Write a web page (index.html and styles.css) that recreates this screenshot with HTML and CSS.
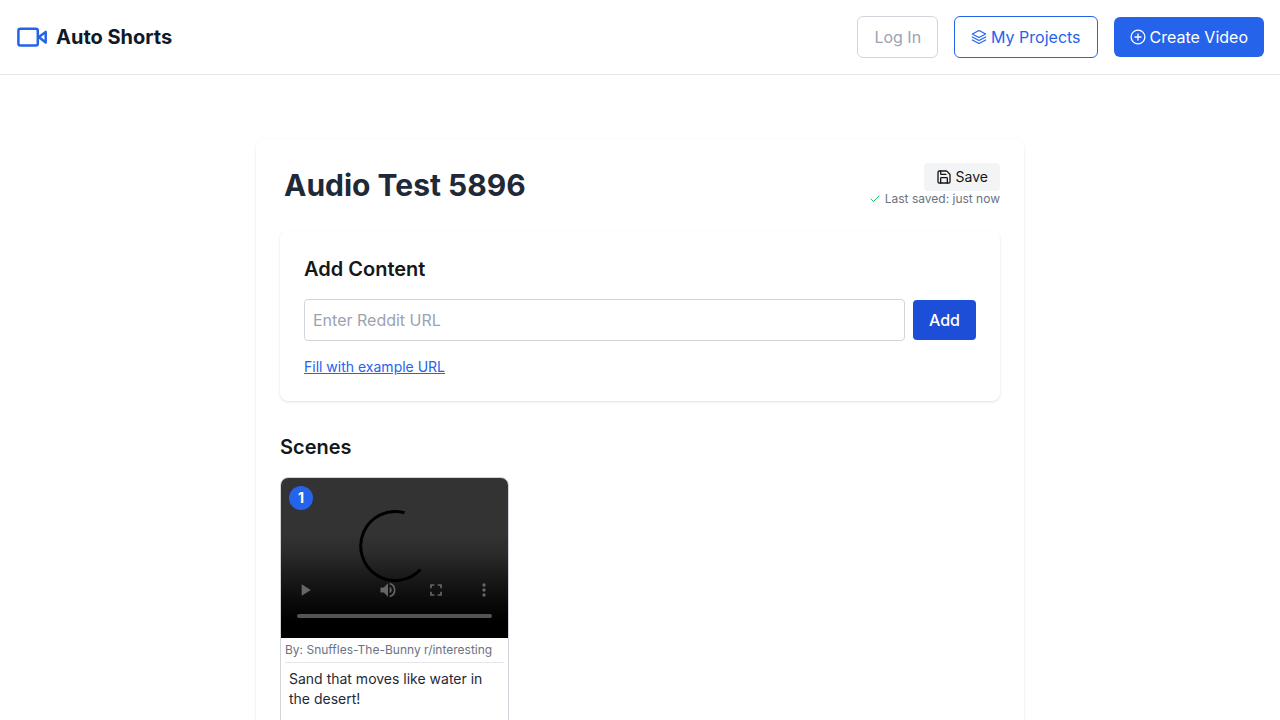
FILE: index.html
```html
<!DOCTYPE html>
<html lang="en">
<head>
<meta charset="utf-8">
<meta name="viewport" content="width=device-width, initial-scale=1">
<title>Auto Shorts</title>
<link rel="stylesheet" href="styles.css">
</head>
<body>
<header class="topbar">
  <a class="brand" href="#">
    <svg class="brand-icon" viewBox="0 0 32 32" fill="none" stroke="currentColor" stroke-width="2.500" stroke-linecap="round" stroke-linejoin="round"><rect x="2.400" y="7.800" width="19.400" height="16.600" rx="2"/><path d="M22.800 16 29.700 10.900v10.600z"/></svg>
    <span>Auto Shorts</span>
  </a>
  <nav class="actions">
    <button class="btn btn-muted" type="button">Log In</button>
    <a class="btn btn-outline" href="#">
      <svg class="icon" viewBox="0 0 16 16" fill="none" stroke="currentColor" stroke-width="1.2" stroke-linecap="round" stroke-linejoin="round"><path d="M8 1.500 14.700 5 8 8.500 1.300 5z"/><path d="M1.300 8 8 11.500 14.700 8"/><path d="M1.300 11 8 14.500 14.700 11"/></svg>
      <span>My Projects</span>
    </a>
    <a class="btn btn-primary" href="#">
      <svg class="icon" viewBox="0 0 16 16" fill="none" stroke="currentColor" stroke-width="1.300" stroke-linecap="round"><circle cx="8" cy="8" r="6.900"/><path d="M8 5v6M5 8h6"/></svg>
      <span>Create Video</span>
    </a>
  </nav>
</header>
<main class="project">
  <div class="project-head">
    <h1 class="project-title">Audio Test 5896</h1>
    <div class="save-area">
      <button class="btn-save" type="button">
        <svg class="icon" viewBox="0 0 24 24" fill="none" stroke="currentColor" stroke-width="2" stroke-linecap="round" stroke-linejoin="round"><path d="M15.200 3a2 2 0 0 1 1.400.600l3.800 3.800a2 2 0 0 1 .600 1.400V19a2 2 0 0 1-2 2H5a2 2 0 0 1-2-2V5a2 2 0 0 1 2-2z"/><path d="M17 21v-7a1 1 0 0 0-1-1H8a1 1 0 0 0-1 1v7M7 3v4a1 1 0 0 0 1 1h7"/></svg>
        <span>Save</span>
      </button>
      <p class="saved">
        <svg class="check" viewBox="0 0 24 24" fill="none" stroke="currentColor" stroke-width="2" stroke-linecap="round" stroke-linejoin="round"><path d="M20 6 9 17l-5-5"/></svg>
        <span>Last saved: just now</span>
      </p>
    </div>
  </div>
  <section class="add-card">
    <h2 class="heading">Add Content</h2>
    <form class="add-form">
      <input class="url-input" type="url" placeholder="Enter Reddit URL" aria-label="Reddit URL">
      <button class="btn-add" type="submit">Add</button>
    </form>
    <a class="example" href="#">Fill with example URL</a>
  </section>
  <section>
    <h2 class="heading">Scenes</h2>
    <div class="scenes">
      <article class="scene">
        <div class="player">
          <span class="badge">1</span>
          <svg class="spinner" viewBox="0 0 72 72" fill="none" stroke="#000" stroke-width="3"><path d="M45.500 2.800A34.500 34.500 0 1 0 61.500 59.500"/></svg>
          <div class="controls">
            <button class="control control-play" type="button" aria-label="Play"><svg viewBox="0 0 24 24" fill="currentColor"><path d="M8 5v14l11-7z"/></svg></button>
            <button class="control" type="button" aria-label="Mute"><svg viewBox="0 0 24 24" fill="currentColor"><path d="M3 9v6h4l5 5V4L7 9H3zm13.500 3A4.500 4.500 0 0 0 14 7.970v8.050A4.500 4.500 0 0 0 16.500 12zM14 3.230v2.060a7 7 0 0 1 0 13.420v2.060a9 9 0 0 0 0-17.540z"/></svg></button>
            <button class="control" type="button" aria-label="Full screen"><svg viewBox="0 0 24 24" fill="currentColor"><path d="M7 14H5v5h5v-2H7v-3zm-2-4h2V7h3V5H5v5zm12 7h-3v2h5v-5h-2v3zM14 5v2h3v3h2V5h-5z"/></svg></button>
            <button class="control" type="button" aria-label="More options"><svg viewBox="0 0 24 24" fill="currentColor"><circle cx="12" cy="6" r="2"/><circle cx="12" cy="12" r="2"/><circle cx="12" cy="18" r="2"/></svg></button>
          </div>
          <div class="timeline"></div>
        </div>
        <div class="scene-body">
          <p class="byline">By: Snuffles-The-Bunny r/interesting</p>
          <p class="caption">Sand that moves like water in the desert!</p>
        </div>
      </article>
    </div>
  </section>
</main>
</body>
</html>
```

FILE: styles.css
```css
* {
  box-sizing: border-box;
}

body {
  height: 100vh;
  margin: 0;
  overflow: hidden;
  background: #fff;
  color: #171717;
  font: 16px/24px Inter, sans-serif;
}

h1, h2, p {
  margin: 0;
}

button, input {
  font: inherit;
}

button {
  cursor: pointer;
}

a {
  color: inherit;
  text-decoration: none;
}

svg {
  display: block;
  flex: none;
}

.icon {
  width: 16px;
  height: 16px;
}

.topbar {
  display: flex;
  align-items: center;
  justify-content: space-between;
  padding: 16px;
  border-bottom: 1px solid #e5e7eb;
}

.brand {
  display: flex;
  align-items: center;
  gap: 8px;
  color: #111827;
  font-size: 20px;
  font-weight: 700;
  line-height: 28px;
}

.brand-icon {
  width: 32px;
  height: 32px;
  color: #2563eb;
}

.actions {
  display: flex;
  align-items: center;
  gap: 16px;
}

.btn {
  display: flex;
  align-items: center;
  gap: 4px;
  padding: 8px 16px;
  border: 1px solid transparent;
  border-radius: 6px;
  background: #fff;
}

.btn-muted {
  border-color: #d1d5db;
  color: #9ca3af;
}

.btn-outline {
  border-color: #2563eb;
  color: #2563eb;
}

.btn-primary {
  border: 0;
  background: #2563eb;
  color: #fff;
}

.project {
  max-width: 768px;
  min-height: 100vh;
  margin: 64px auto;
  padding: 24px;
  border-radius: 8px;
  box-shadow: 0 1px 3px rgb(0 0 0 / 10%), 0 1px 2px -1px rgb(0 0 0 / 10%);
}

.project-head {
  display: flex;
  justify-content: space-between;
  margin-bottom: 24px;
}

.project-title {
  padding: 4px;
  color: #1f2937;
  font-size: 30px;
  font-weight: 700;
  line-height: 36px;
}

.save-area {
  display: flex;
  flex-direction: column;
  align-items: flex-end;
}

.btn-save {
  display: flex;
  align-items: center;
  gap: 4px;
  padding: 4px 12px;
  border: 0;
  border-radius: 4px;
  background: #f3f4f6;
  color: #171717;
  font-size: 14px;
  line-height: 20px;
}

.saved {
  display: flex;
  align-items: center;
  gap: 4px;
  color: #6b7280;
  font-size: 12px;
  line-height: 16px;
}

.check {
  width: 12px;
  height: 12px;
  color: #22c55e;
}

.add-card {
  margin-bottom: 32px;
  padding: 24px;
  border-radius: 8px;
  box-shadow: 0 1px 3px rgb(0 0 0 / 10%), 0 1px 2px -1px rgb(0 0 0 / 10%);
}

.heading {
  margin-bottom: 16px;
  font-size: 20px;
  font-weight: 600;
  line-height: 28px;
}

.add-form {
  display: flex;
  align-items: center;
  gap: 8px;
  margin-bottom: 16px;
}

.url-input {
  flex: 1;
  min-width: 0;
  height: 42px;
  padding: 8px;
  border: 1px solid #d1d5db;
  border-radius: 4px;
  background: #fff;
}

.url-input::placeholder {
  color: #9ca3af;
}

.btn-add {
  padding: 8px 16px;
  border: 0;
  border-radius: 4px;
  background: #1d4ed8;
  color: #fff;
  font-weight: 500;
}

.example {
  display: block;
  width: fit-content;
  color: #2563eb;
  font-size: 14px;
  line-height: 20px;
  text-decoration: underline;
}

.scenes {
  display: grid;
  grid-template-columns: repeat(3, 1fr);
  gap: 16px;
}

.scene {
  min-height: 320px;
  overflow: hidden;
  border: 1px solid #d1d5db;
  border-radius: 8px;
}

.player {
  position: relative;
  display: flex;
  flex-direction: column;
  justify-content: flex-end;
  gap: 14px;
  height: 160px;
  padding: 0 16px 20px;
  background: linear-gradient(#333 0%, #333 35%, #2b2b2b 47%, #1c1c1c 60%, #0c0c0c 75%, #000 90%);
}

.badge {
  position: absolute;
  top: 8px;
  left: 8px;
  width: 24px;
  height: 24px;
  border-radius: 50%;
  background: #2563eb;
  color: #fff;
  font-size: 14px;
  font-weight: 700;
  line-height: 24px;
  text-align: center;
}

.spinner {
  position: absolute;
  top: 32px;
  left: calc(50% - 36px);
  width: 72px;
  height: 72px;
}

.controls {
  position: relative;
  display: flex;
  gap: 28px;
  margin: 0 -2px;
}

.control {
  width: 20px;
  height: 20px;
  padding: 0;
  border: 0;
  background: none;
  color: #666;
}

.control-play {
  margin-right: auto;
}

.timeline {
  height: 4px;
  border-radius: 2px;
  background: #545454;
}

.scene-body {
  padding: 4px;
}

.byline {
  padding-bottom: 4px;
  border-bottom: 1px solid #e5e7eb;
  color: #6b7280;
  font-size: 12px;
  line-height: 16px;
}

.caption {
  padding: 6px 4px;
  color: #1f2937;
  font-size: 14px;
  line-height: 20px;
}
```
